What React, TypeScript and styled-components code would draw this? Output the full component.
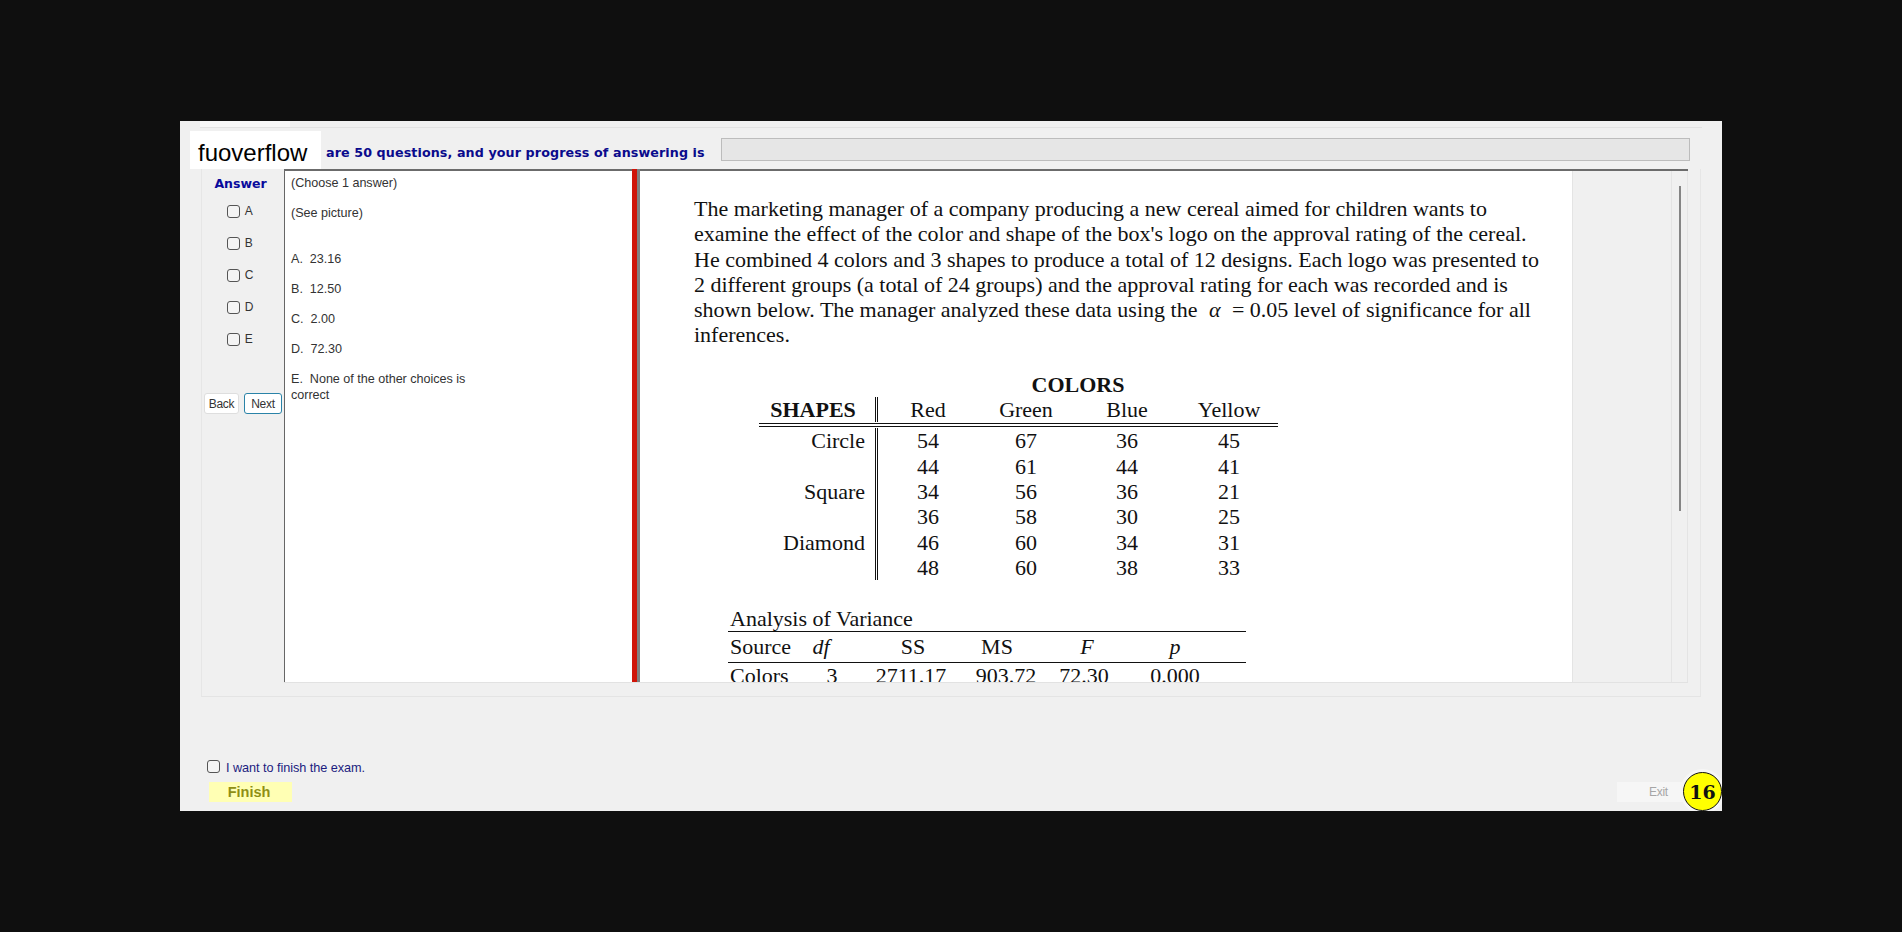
import { FC, Fragment } from 'react'
import styled, { createGlobalStyle } from 'styled-components'

const GlobalStyle = createGlobalStyle`
  html, body {
    margin: 0;
    padding: 0;
    background: #0f0f0f;
  }
`
const Page = styled.div`
  width: 1902px;
  height: 932px;
  padding: 121px 0 0 180px;
  box-sizing: border-box;
  overflow: hidden;
  background: #0f0f0f;
`
const Window = styled.div`
  position: relative;
  display: flex;
  flex-direction: column;
  width: 1542px;
  height: 690px;
  background: #f0f0f0;
  box-sizing: border-box;
  overflow: hidden;
`
const TabStrip = styled.div`
  height: 6px;
  margin: 0 20px 0 20px;
  border-bottom: 1px solid #e2e2e2;
`
const Tab = styled.div`
  width: 90px;
  height: 6px;
  background: #f7f7f7;
`
const Logo = styled.div`
  position: absolute;
  left: 10px;
  top: 10px;
  width: 131px;
  height: 38px;
  background: #fff;
  display: flex;
  align-items: center;
  padding: 5px 0 0 8px;
  box-sizing: border-box;
  font-family: 'Liberation Sans', Arial, sans-serif;
  font-size: 24px;
  color: #000;
`
const HeaderRow = styled.div`
  display: flex;
  align-items: center;
  height: 23px;
  margin-top: 10px;
  padding-left: 146px;
  padding-right: 32px;
`
const ProgressText = styled.span`
  font-family: 'DejaVu Sans', Verdana, sans-serif;
  font-weight: 700;
  font-size: 12.7px;
  letter-spacing: 0.1px;
  color: #0a0a8c;
  margin-top: 6px;
  white-space: nowrap;
`
const ProgressBar = styled.div`
  width: 969px;
  height: 23px;
  margin-left: auto;
  box-sizing: border-box;
  background: #e6e6e6;
  border: 1px solid #bcbcbc;
`
const Group = styled.div`
  display: flex;
  width: 1500px;
  height: 528px;
  margin: 8px 0 0 21px;
  padding-bottom: 13px;
  box-sizing: border-box;
  border-left: 1px solid #e6e6e6;
  border-right: 1px solid #e6e6e6;
  border-bottom: 1px solid #e4e4e4;
`
const AnswerCol = styled.div`
  width: 82px;
  flex: none;
  display: flex;
  flex-direction: column;
  align-items: center;
`
const AnswerTitle = styled.div`
  font-family: 'DejaVu Sans', Verdana, sans-serif;
  font-weight: 700;
  font-size: 12.5px;
  color: #0a0a9c;
  margin-top: 8px;
  line-height: 14px;
  margin-right: 5px;
`
const OptionList = styled.div`
  display: flex;
  flex-direction: column;
  gap: 19px;
  margin-top: 14px;
  margin-right: 6px;
`
const OptionRow = styled.label`
  display: flex;
  align-items: flex-start;
  gap: 5px;
  height: 13px;
  font-family: 'Liberation Sans', Arial, sans-serif;
  font-size: 12px;
  line-height: 12px;
  color: #333;
`
const Box = styled.span`
  width: 13px;
  height: 13px;
  box-sizing: border-box;
  border: 1px solid #555;
  border-radius: 3px;
  background: #f4f4f4;
  flex: none;
`
const NavRow = styled.div`
  display: flex;
  gap: 5px;
  margin-top: 47px;
`
const NavButton = styled.button<{ $focus?: boolean }>`
  width: ${p => (p.$focus ? '38px' : '35px')};
  height: 21px;
  padding: 0;
  box-sizing: border-box;
  background: #fff;
  border: 1px solid ${p => (p.$focus ? '#2a83a8' : '#dedede')};
  border-radius: 3px;
  font-family: 'Liberation Sans', Arial, sans-serif;
  font-size: 12px;
  letter-spacing: -0.3px;
  color: #333;
`
const Main = styled.div`
  display: flex;
  width: 1404px;
  flex: none;
  border-top: 2px solid #6b6b6b;
  border-bottom: 1px solid #e2e2e2;
`
const QuestionPane = styled.div`
  width: 348px;
  flex: none;
  box-sizing: border-box;
  background: #fff;
  border-left: 1px solid #666;
  padding: 4px 0 0 6px;
  font-family: 'Liberation Sans', Arial, sans-serif;
  font-size: 12.6px;
  line-height: 16px;
  letter-spacing: -0.02px;
  color: #333;
`
const QuestionLine = styled.div<{ $gap: number }>`
  margin-top: ${p => p.$gap}px;
  max-width: 190px;
  white-space: pre-wrap;
`
const Splitter = styled.div`
  width: 8px;
  flex: none;
  margin-top: -2px;
  box-sizing: border-box;
  background: #d01408;
  border-right: 3px solid #808080;
`
const PicturePane = styled.div`
  width: 932px;
  flex: none;
  box-sizing: border-box;
  background: #fff;
  overflow: hidden;
  padding: 25px 0 0 54px;
  font-family: 'Liberation Serif', 'Times New Roman', serif;
  font-size: 22px;
  line-height: 25.3px;
  color: #111;
`
const TextLine = styled.div`
  white-space: nowrap;
`
const Alpha = styled.i`
  margin: 0 6px;
`
const ColorsTitle = styled.div`
  width: 519px;
  margin: 24px 0 0 65px;
  padding-left: 119px;
  box-sizing: border-box;
  text-align: center;
  font-weight: 700;
`
const DataGrid = styled.div`
  display: grid;
  grid-template-columns: 116px 3px 100px 96px 106px 98px;
  width: 519px;
  margin-left: 65px;
`
const HeadRule = styled.div`
  grid-column: 1 / -1;
  height: 2px;
  border-top: 1px solid #111;
  border-bottom: 1px solid #111;
  margin: 1px 0;
`
const ShapeCell = styled.div<{ $head?: boolean }>`
  text-align: ${p => (p.$head ? 'center' : 'right')};
  font-weight: ${p => (p.$head ? 700 : 400)};
  padding-right: ${p => (p.$head ? '8px' : '10px')};
`
const Divider = styled.div`
  border-left: 1px solid #111;
  border-right: 1px solid #111;
  width: 1px;
`
const NumCell = styled.div`
  text-align: center;
`
const AnovaTitle = styled.div`
  margin: 26px 0 0 36px;
`
const AnovaGrid = styled.div`
  display: grid;
  grid-template-columns: 79px 50px 108px 82px 74px 125px;
  width: 518px;
  margin-left: 34px;
  border-top: 1px solid #111;
`
const AnovaHead = styled.div<{ $left?: boolean; $italic?: boolean; $pl?: number; $pr?: number }>`
  height: 31px;
  line-height: 30px;
  box-sizing: border-box;
  white-space: nowrap;
  border-bottom: 1px solid #111;
  text-align: ${p => (p.$left ? 'left' : 'center')};
  padding-left: ${p => p.$pl ?? 0}px;
  padding-right: ${p => p.$pr ?? 0}px;
  font-style: ${p => (p.$italic ? 'italic' : 'normal')};
`
const AnovaCell = styled.div<{ $left?: boolean; $pr?: number }>`
  white-space: nowrap;
  text-align: ${p => (p.$left ? 'left' : 'center')};
  padding-left: ${p => (p.$left ? '2px' : 0)};
  padding-right: ${p => p.$pr ?? 0}px;
`
const SidePane = styled.div`
  width: 100px;
  flex: none;
  box-sizing: border-box;
  border-left: 1px solid #e4e4e4;
  border-right: 1px solid #e4e4e4;
  background: #f0f0f0;
`
const ScrollTrack = styled.div`
  width: 16px;
  flex: none;
  box-sizing: border-box;
  border-right: 1px solid #e4e4e4;
  padding: 15px 0 0 7px;
`
const ScrollThumb = styled.div`
  width: 2px;
  height: 325px;
  background: #858585;
`
const Footer = styled.div`
  flex: 1;
  display: flex;
  align-items: flex-end;
  justify-content: space-between;
  padding: 0 38px 9px 27px;
`
const FinishCol = styled.div`
  display: flex;
  flex-direction: column;
`
const FinishCheck = styled.label`
  display: flex;
  align-items: flex-start;
  gap: 6px;
  margin: 0 0 6px 0;
  font-family: 'Liberation Sans', Arial, sans-serif;
  font-size: 12.7px;
  line-height: 15px;
  letter-spacing: -0.05px;
  color: #1c1c80;
`
const FinishLabel = styled.span`
  padding-top: 1px;
`
const FinishButton = styled.button`
  width: 83px;
  height: 20px;
  margin-left: 2px;
  padding: 0 3px 0 0;
  border: none;
  background: #ffffb4;
  font-family: 'Liberation Sans', Arial, sans-serif;
  font-weight: 700;
  font-size: 14.5px;
  color: #8f8f14;
`
const ExitButton = styled.button`
  width: 67px;
  height: 20px;
  padding: 0 0 0 16px;
  border: none;
  background: #f6f6f6;
  font-family: 'Liberation Sans', Arial, sans-serif;
  font-size: 12px;
  letter-spacing: -0.3px;
  color: #a6a6a6;
`
const Badge = styled.div`
  position: absolute;
  right: 0;
  bottom: 0;
  width: 39px;
  height: 39px;
  box-sizing: border-box;
  border: 1px solid #111;
  border-radius: 50%;
  background: #ffff00;
  box-shadow: 0 0 0 3px #f6f6f6;
  display: flex;
  align-items: center;
  justify-content: center;
  font-family: 'DejaVu Serif', serif;
  font-weight: 700;
  font-size: 19px;
  color: #111;
`

const options = ['A', 'B', 'C', 'D', 'E']

const rows = [
  ['Circle', '54', '67', '36', '45'],
  ['', '44', '61', '44', '41'],
  ['Square', '34', '56', '36', '21'],
  ['', '36', '58', '30', '25'],
  ['Diamond', '46', '60', '34', '31'],
  ['', '48', '60', '38', '33'],
]

const App: FC = () => {
  return (
    <Page>
      <GlobalStyle />
      <Window>
        <TabStrip>
          <Tab />
        </TabStrip>
        <Logo>fuoverflow</Logo>
        <HeaderRow>
          <ProgressText>are 50 questions, and your progress of answering is</ProgressText>
          <ProgressBar />
        </HeaderRow>
        <Group>
          <AnswerCol>
            <AnswerTitle>Answer</AnswerTitle>
            <OptionList>
              {options.map(o => (
                <OptionRow key={o}>
                  <Box />
                  {o}
                </OptionRow>
              ))}
            </OptionList>
            <NavRow>
              <NavButton>Back</NavButton>
              <NavButton $focus>Next</NavButton>
            </NavRow>
          </AnswerCol>
          <Main>
            <QuestionPane>
              <QuestionLine $gap={0}>(Choose 1 answer)</QuestionLine>
              <QuestionLine $gap={14}>(See picture)</QuestionLine>
              <QuestionLine $gap={30}>A.  23.16</QuestionLine>
              <QuestionLine $gap={14}>B.  12.50</QuestionLine>
              <QuestionLine $gap={14}>C.  2.00</QuestionLine>
              <QuestionLine $gap={14}>D.  72.30</QuestionLine>
              <QuestionLine $gap={14}>E.  None of the other choices is correct</QuestionLine>
            </QuestionPane>
            <Splitter />
            <PicturePane>
              <TextLine>The marketing manager of a company producing a new cereal aimed for children wants to</TextLine>
              <TextLine>examine the effect of the color and shape of the box's logo on the approval rating of the cereal.</TextLine>
              <TextLine>He combined 4 colors and 3 shapes to produce a total of 12 designs. Each logo was presented to</TextLine>
              <TextLine>2 different groups (a total of 24 groups) and the approval rating for each was recorded and is</TextLine>
              <TextLine>shown below. The manager analyzed these data using the <Alpha>α</Alpha> = 0.05 level of significance for all</TextLine>
              <TextLine>inferences.</TextLine>
              <ColorsTitle>COLORS</ColorsTitle>
              <DataGrid>
                <ShapeCell $head>SHAPES</ShapeCell>
                <Divider />
                <NumCell>Red</NumCell>
                <NumCell>Green</NumCell>
                <NumCell>Blue</NumCell>
                <NumCell>Yellow</NumCell>
                <HeadRule />
                {rows.map((r, i) => (
                  <Fragment key={i}>
                    <ShapeCell>{r[0]}</ShapeCell>
                    <Divider />
                    <NumCell>{r[1]}</NumCell>
                    <NumCell>{r[2]}</NumCell>
                    <NumCell>{r[3]}</NumCell>
                    <NumCell>{r[4]}</NumCell>
                  </Fragment>
                ))}
              </DataGrid>
              <AnovaTitle>Analysis of Variance</AnovaTitle>
              <AnovaGrid>
                <AnovaHead $left $pl={2}>Source</AnovaHead>
                <AnovaHead $italic $pr={22}>df</AnovaHead>
                <AnovaHead $pl={4}>SS</AnovaHead>
                <AnovaHead $pr={18}>MS</AnovaHead>
                <AnovaHead $italic $pl={6}>F</AnovaHead>
                <AnovaHead $italic $pr={17}>p</AnovaHead>
                <AnovaCell $left>Colors</AnovaCell>
                <AnovaCell>3</AnovaCell>
                <AnovaCell>2711.17</AnovaCell>
                <AnovaCell>903.72</AnovaCell>
                <AnovaCell>72.30</AnovaCell>
                <AnovaCell $pr={17}>0.000</AnovaCell>
              </AnovaGrid>
            </PicturePane>
            <SidePane />
            <ScrollTrack>
              <ScrollThumb />
            </ScrollTrack>
          </Main>
        </Group>
        <Footer>
          <FinishCol>
            <FinishCheck>
              <Box />
              <FinishLabel>I want to finish the exam.</FinishLabel>
            </FinishCheck>
            <FinishButton>Finish</FinishButton>
          </FinishCol>
          <ExitButton>Exit</ExitButton>
        </Footer>
        <Badge>16</Badge>
      </Window>
    </Page>
  )
}

export default App
